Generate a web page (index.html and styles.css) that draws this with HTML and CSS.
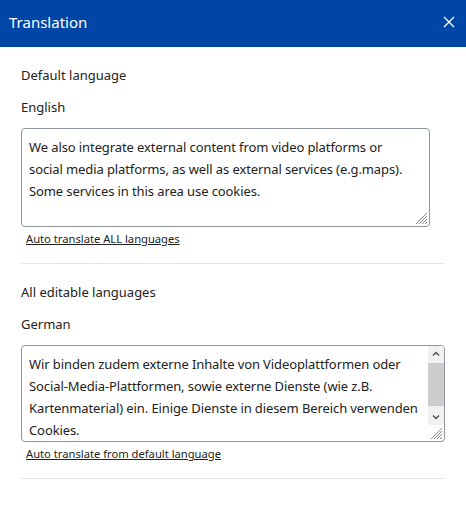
FILE: index.html
```html
<!DOCTYPE html>
<html lang="en">
<head>
  <meta charset="UTF-8" />
  <title>Translation</title>
  <link rel="stylesheet" href="styles.css">
</head>
<body>

  <header class="dialog-head">
    <div class="dialog-title">Translation</div>
    <button class="close-btn" aria-label="Close">
      <svg width="12" height="12" viewBox="0 0 12 12">
        <path d="M1 1 L11 11 M11 1 L1 11" stroke="#fff" stroke-width="1.4" fill="none" />
      </svg>
    </button>
  </header>

  <main class="dialog-body">
    <section class="lang-block">
      <div class="group-label">Default language</div>
      <div class="lang-name">English</div>
      <div class="text-wrap text-wrap--default">
        <textarea class="lang-text">We also integrate external content from video platforms or
social media platforms, as well as external services (e.g.maps).
Some services in this area use cookies.</textarea>
        <svg class="grip" width="14" height="14" viewBox="0 0 14 14">
          <path d="M13 2 L2 13 M13 5 L5 13 M13 8 L8 13 M13 11 L11 13" stroke="#8a8a8a" stroke-width="1" fill="none" />
        </svg>
      </div>
      <a href="#" class="auto-link">Auto translate ALL languages</a>
    </section>

    <section class="lang-block">
      <div class="group-label">All editable languages</div>
      <div class="lang-name">German</div>
      <div class="text-wrap text-wrap--edit">
        <textarea class="lang-text lang-text--scroll">Wir binden zudem externe Inhalte von Videoplattformen oder
Social-Media-Plattformen, sowie externe Dienste (wie z.B.
Kartenmaterial) ein. Einige Dienste in diesem Bereich verwenden
Cookies.</textarea>
        <!-- scrollbar drawn by hand, the browser hides native ones -->
        <div class="fake-scroll">
          <div class="sb-btn">
            <svg width="8" height="6" viewBox="0 0 8 6"><path d="M1 4.5 L4 1.5 L7 4.5" stroke="#505050" stroke-width="1.4" fill="none" /></svg>
          </div>
          <div class="sb-track"><div class="sb-thumb"></div></div>
          <div class="sb-btn">
            <svg width="8" height="6" viewBox="0 0 8 6"><path d="M1 1.5 L4 4.5 L7 1.5" stroke="#505050" stroke-width="1.4" fill="none" /></svg>
          </div>
        </div>
        <svg class="grip" width="14" height="14" viewBox="0 0 14 14">
          <path d="M13 2 L2 13 M13 5 L5 13 M13 8 L8 13 M13 11 L11 13" stroke="#8a8a8a" stroke-width="1" fill="none" />
        </svg>
      </div>
      <a href="#" class="auto-link">Auto translate from default language</a>
    </section>
  </main>

</body>
</html>
```

FILE: styles.css
```css
:root {
  --head-blue: #0046a6;
  --text-dark: #222;
  --line-grey: #e6e6e6;
}

body {
  margin: 0;
  font-family: "Noto Sans", "Open Sans", sans-serif;
  color: var(--text-dark);
  background: #fff;
}

.dialog-head {
  background-color: var(--head-blue);
  color: #fff;
  box-sizing: border-box;
  height: 47px;
  padding: 0 10px 3px 9px;
  display: flex;
  justify-content: space-between;
  align-items: center;
}

.dialog-title {
  font-size: 15px;
}

.close-btn {
  background: none;
  border: none;
  padding: 0;
  width: 14px;
  height: 14px;
  display: flex;
  align-items: center;
  justify-content: center;
  cursor: pointer;
}

.dialog-body {
  padding: 0 21px;
}

.lang-block {
  padding-top: 18px;
  padding-bottom: 16px;
  border-bottom: 1px solid var(--line-grey);
}

.group-label,
.lang-name {
  font-size: 13px;
  line-height: 20px;
}

.lang-name {
  margin-top: 12px;
}

/* textareas */
.text-wrap {
  position: relative;
  margin-top: 11px;
  height: 97px;
}

.text-wrap--default {
  width: 409px;
  height: 99px;
}

.lang-text {
  display: block;
  box-sizing: border-box;
  width: 100%;
  height: 100%;
  margin: 0;
  padding: 7px;
  border: 1px solid #8f96a3;
  border-radius: 4px;
  font-family: inherit;
  font-size: 13px;
  line-height: 22px;
  letter-spacing: -0.1px;
  color: var(--text-dark);
  white-space: pre;
  overflow: hidden;
  resize: none;
}

.lang-text--scroll {
  padding-right: 23px;
}

.grip {
  position: absolute;
  right: 2px;
  bottom: 2px;
}

.fake-scroll {
  position: absolute;
  top: 1px;
  right: 1px;
  bottom: 17px;
  width: 16px;
  background: #f1f1f1;
  border-top-right-radius: 3px;
  display: flex;
  flex-direction: column;
}

.sb-btn {
  height: 16px;
  display: flex;
  align-items: center;
  justify-content: center;
}

.sb-track {
  flex: 1;
  padding-top: 1px;
}

.sb-thumb {
  height: 43px;
  background: #cdcdcd;
}

.auto-link {
  display: block;
  width: max-content;
  margin: 4px 0 0 5px;
  font-size: 11.2px;
  line-height: 16px;
  color: var(--text-dark);
}
```
